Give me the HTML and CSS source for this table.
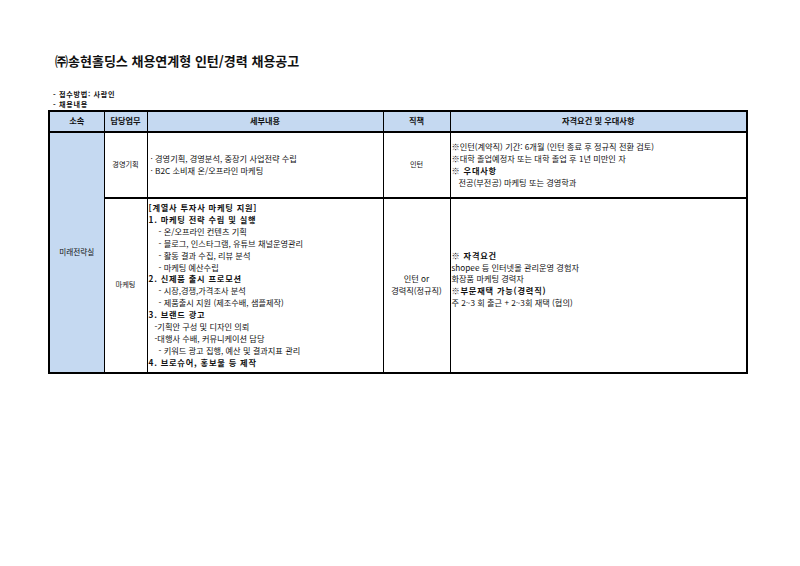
FILE: index.html
```html
<!DOCTYPE html>
<html lang="ko">
<head>
<meta charset="utf-8">
<link rel="stylesheet" href="styles.css">
</head>
<body>
<div class="page">
  <h1 class="title">㈜송현홀딩스 채용연계형 인턴/경력 채용공고</h1>
  <div class="notes">
    <div>- 접수방법: 사람인</div>
    <div>- 채용내용</div>
  </div>
  <table class="job">
    <colgroup>
      <col class="c1"><col class="c2"><col class="c3"><col class="c4"><col class="c5">
    </colgroup>
    <thead>
      <tr class="hrow">
        <th>소속</th>
        <th>담당업무</th>
        <th>세부내용</th>
        <th>직책</th>
        <th>자격요건 및 우대사항</th>
      </tr>
    </thead>
    <tbody>
      <tr class="r1">
        <td rowspan="2" class="dept">미래전략실</td>
        <td class="center small">경영기획</td>
        <td class="detail1">
          <div class="ln">· 경영기획, 경영분석, 중장기 사업전략 수립</div>
          <div class="ln">· B2C 소비재 온/오프라인 마케팅</div>
        </td>
        <td class="center small">인턴</td>
        <td class="qual">
          <div class="ln">※인턴(계약직) 기간: 6개월 (인턴 종료 후 정규직 전환 검토)</div>
          <div class="ln">※대학 졸업예정자 또는 대학 졸업 후 1년 미만인 자</div>
          <div class="ln b">※ 우대사항</div>
          <div class="ln ind2">전공(부전공) 마케팅 또는 경영학과</div>
        </td>
      </tr>
      <tr class="r2">
        <td class="center small">마케팅</td>
        <td class="detail2">
          <div class="ln b">[계열사 투자사 마케팅 지원]</div>
          <div class="ln b">1. 마케팅 전략 수립 및 실행</div>
          <div class="ln ind">- 온/오프라인 컨텐츠 기획</div>
          <div class="ln ind">- 블로그, 인스타그램, 유튜브 채널운영관리</div>
          <div class="ln ind">- 활동 결과 수집, 리뷰 분석</div>
          <div class="ln ind">- 마케팅 예산수립</div>
          <div class="ln b">2. 신제품 출시 프로모션</div>
          <div class="ln ind">- 시장,경쟁,가격조사 분석</div>
          <div class="ln ind">- 제품출시 지원 (제조수배, 샘플제작)</div>
          <div class="ln b">3. 브랜드 광고</div>
          <div class="ln ind3">-기획안 구성 및 디자인 의뢰</div>
          <div class="ln ind3">-대행사 수배, 커뮤니케이션 담당</div>
          <div class="ln ind">- 키워드 광고 집행, 예산 및 결과지표 관리</div>
          <div class="ln b">4. 브로슈어, 홍보물 등 제작</div>
        </td>
        <td class="center">
          <div class="ln">인턴 or</div>
          <div class="ln">경력직(정규직)</div>
        </td>
        <td class="qual">
          <div class="ln b">※ 자격요건</div>
          <div class="ln">shopee 등 인터넷몰 관리운영 경험자</div>
          <div class="ln">화장품 마케팅 경력자</div>
          <div class="ln b">※부문재택 가능(경력직)</div>
          <div class="ln">주 2~3 회 출근 + 2~3회 재택 (협의)</div>
          <div class="ln">&nbsp;</div>
        </td>
      </tr>
    </tbody>
  </table>
</div>
</body>
</html>
```
FILE: styles.css
```css
html, body {
  margin: 0;
  padding: 0;
  background: #ffffff;
}

body {
  font-family: "Noto Sans CJK KR", "Noto Sans", sans-serif;
  color: #111111;
}

.page {
  padding: 52px 0 0 48px;
}

.title {
  margin: 0 0 0 7px;
  font-size: 13px;
  line-height: 18px;
  font-weight: 700;
  letter-spacing: 0;
}

.notes {
  margin: 19px 0 0 5px;
  font-size: 7.1px;
  line-height: 10.4px;
  font-weight: 700;
  letter-spacing: 0.7px;
}

.job {
  border-collapse: collapse;
  table-layout: fixed;
  width: 698px;
  border: 2px solid #000;
  font-size: 8.2px;
  line-height: 11.9px;
}

.c1 { width: 55px; }
.c2 { width: 43px; }
.c3 { width: 236px; }
.c4 { width: 67px; }
.c5 { width: 297px; }

.job th,
.job td {
  border: 1.5px solid #000;
  padding: 0;
  vertical-align: middle;
}

.job th {
  background: #c5d9f1;
  font-weight: 700;
  font-size: 8.2px;
  text-align: center;
  border-bottom-width: 2px;
}

.hrow { height: 21px; }
.r1 { height: 66px; }
.r2 { height: 175px; }

.r1 td { border-bottom-width: 2px; }

.dept {
  background: #c5d9f1;
  text-align: center;
  font-size: 7.6px;
}

.center { text-align: center; }

.small { font-size: 7.2px; }

.detail1 { padding-left: 3px !important; }
.detail2 { padding-left: 1px !important; }
.qual { padding-left: 1px !important; }

.ln { white-space: nowrap; }

.b {
  font-weight: 700;
  font-size: 8.2px;
  letter-spacing: 0.8px;
}

.ind { padding-left: 10px; }
.ind2 { padding-left: 7px; }
.ind3 { padding-left: 6px; }
```
